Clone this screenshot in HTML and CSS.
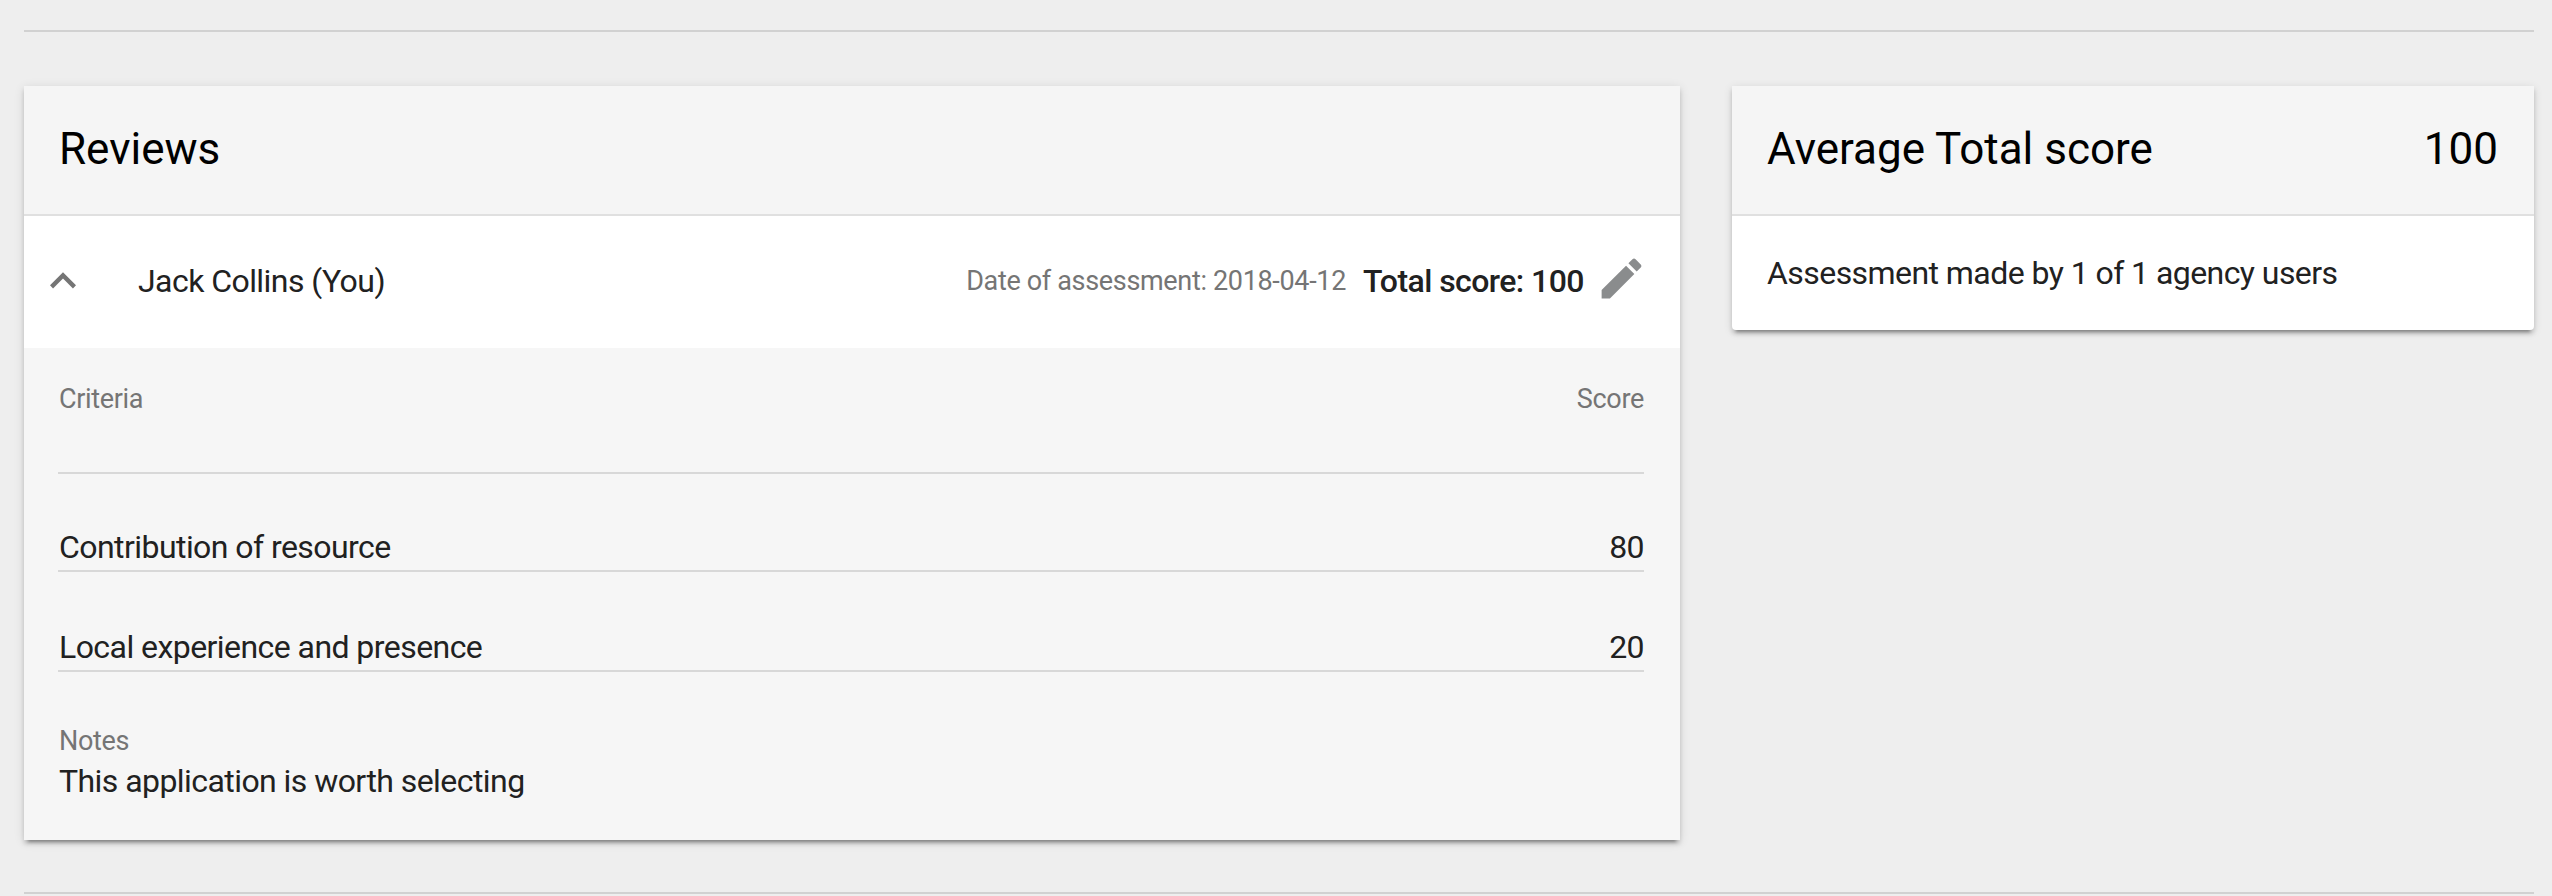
FILE: index.html
```html
<!DOCTYPE html>
<html lang="en">
<head>
<meta charset="utf-8">
<title>Reviews</title>
<link rel="stylesheet" href="styles.css">
</head>
<body>
<main class="page">
  <section class="overview">
    <article class="card">
      <header class="card-header"><h2 class="card-title">Reviews</h2></header>
      <div class="reviewer">
        <svg class="chevron" viewBox="0 0 24 24"><path d="M12 8l-6 6 1.41 1.41L12 10.83l4.59 4.58L18 14z"/></svg>
        <span class="reviewer-name">Jack Collins (You)</span>
        <span class="date">Date of assessment: 2018-04-12</span>
        <span class="total">Total score: 100</span>
        <svg class="edit" viewBox="0 0 24 24"><path d="M3 17.25V21h3.75L17.81 9.94l-3.75-3.75L3 17.25zM20.71 7.04c.39-.39.39-1.02 0-1.41l-2.34-2.34c-.39-.39-1.02-.39-1.41 0l-1.83 1.83 3.75 3.75 1.83-1.83z"/></svg>
      </div>
      <div class="details">
        <div class="row row-head"><span>Criteria</span><span>Score</span></div>
        <div class="row"><span>Contribution of resource</span><span>80</span></div>
        <div class="row"><span>Local experience and presence</span><span>20</span></div>
        <div class="notes-label">Notes</div>
        <div class="notes">This application is worth selecting</div>
      </div>
    </article>
    <article class="card card-average">
      <header class="card-header"><h2 class="card-title">Average Total score</h2><span class="card-title">100</span></header>
      <p class="summary">Assessment made by 1 of 1 agency users</p>
    </article>
  </section>
</main>
</body>
</html>
```
FILE: styles.css
```css
* { box-sizing: border-box; }
body {
  margin: 0;
  background: #eee;
  color: #212121;
  font-family: Roboto, "Liberation Sans", sans-serif;
  font-size: 32px;
  line-height: 40px;
  letter-spacing: -0.56px;
}
.page { padding: 30px 18px 0 24px; }
.overview {
  display: grid;
  grid-template-columns: 1656px 802px;
  column-gap: 52px;
  align-items: start;
  height: 864px;
  padding-top: 54px;
  border-top: 2px solid #d1d1d1;
  border-bottom: 2px solid #d1d1d1;
}
.card {
  background: #fff;
  box-shadow: 0 4px 4px 0 rgba(0,0,0,.14), 0 2px 10px 0 rgba(0,0,0,.12), 0 6px 3px -4px rgba(0,0,0,.3);
}
.card-average { border-radius: 0 0 4px 4px; }
.card-header {
  display: flex;
  align-items: center;
  justify-content: space-between;
  height: 130px;
  padding: 0 36px 2px 35px;
  background: #f5f5f5;
  border-bottom: 2px solid #e0e0e0;
}
.card-title { margin: 0; color: #000; font-size: 44px; font-weight: 400; line-height: 56px; letter-spacing: 0; }
.reviewer { display: flex; align-items: center; height: 132px; padding: 0 32px 2px 13px; }
.chevron { width: 52px; height: 52px; fill: #757575; }
.reviewer-name { margin-left: 49px; margin-right: auto; }
.date { margin-right: 17px; color: #757575; font-size: 27px; letter-spacing: -0.33px; }
.total { margin-right: 11px; font-weight: 500; }
.edit { width: 53px; height: 53px; fill: #8a8c8d; margin-bottom: 6px; }
.details { height: 492px; padding: 31px 36px 0 34px; background: #f6f6f6; }
.row { display: flex; justify-content: space-between; height: 100px; padding-top: 55px; border-bottom: 2px solid #d8d8d8; }
.row span { padding-left: 1px; }
.row-head { height: 95px; padding-top: 0; color: #757575; font-size: 27px; letter-spacing: -0.33px; }
.row-head + .row { height: 98px; padding-top: 53px; }
.notes-label { margin-top: 49px; padding-left: 1px; color: #757575; font-size: 27px; letter-spacing: -0.33px; }
.notes { padding-left: 1px; }
.summary { margin: 0; padding: 37px 35px; }
```
